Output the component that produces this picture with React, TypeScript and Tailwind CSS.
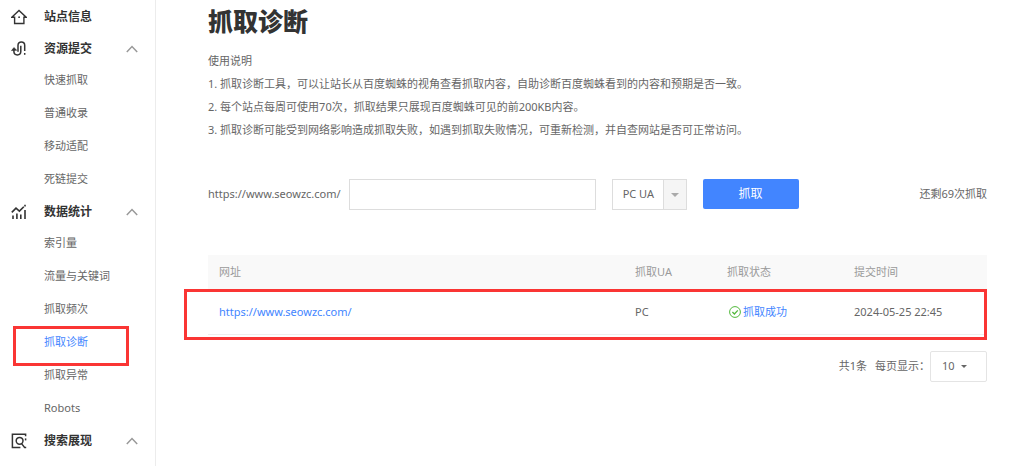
import type { ReactNode } from "react"

type Item = { label: string; active?: boolean }
type Section = { title: string; icon: ReactNode; items?: Item[]; collapsible?: boolean }

const HomeIcon = () => (
  <svg viewBox="0 0 16 16" className="w-4 h-4" fill="none" stroke="currentColor" strokeWidth="1.4">
    <path d="M0.8 8.3 8 1.4l7.2 6.9H12.9v6.2H3.6V8.3z" />
    <circle cx="8.1" cy="8.2" r="0.9" fill="currentColor" stroke="none" />
  </svg>
)

const LinkIcon = () => (
  <svg viewBox="0 0 16 16" className="w-4 h-4" fill="none" stroke="currentColor" strokeWidth="1.5">
    <path d="M2.9 8.2v2.4c0 2 1.4 3.3 3.4 3.3s3.5-1.3 3.5-3.3V4.8" />
    <path d="M7 10.8V4.2c0-2 1.4-3.3 3.3-3.3s3.4 1.3 3.4 3.3V10" />
    <path d="M0.5 9.6 2.9 6.6l2.8 2.6z" fill="currentColor" strokeWidth="0.6" />
    <path d="M13.7 12v1.8" />
  </svg>
)

const ChartIcon = () => (
  <svg viewBox="0 0 16 16" className="w-4 h-4" fill="none" stroke="currentColor" strokeWidth="1.6">
    <path d="M0.8 8.4 5 4.2l3.4 2.9 4.4-4.4" />
    <path d="M2 11.4V15M5.9 9.4V15M9.8 10.4V15M14 6v9M14 0.8v1.6" />
  </svg>
)

const SearchIcon = () => (
  <svg viewBox="0 0 16 16" className="w-4 h-4" fill="none" stroke="currentColor" strokeWidth="1.5">
    <path d="M14.6 3.2v-2H1.4v13.2h8" />
    <path d="M14.6 5.4v2" />
    <circle cx="8.6" cy="7.8" r="3.4" />
    <path d="M10.6 10.6l3 3.8h1.6" />
  </svg>
)

const sections: Section[] = [
  { title: "站点信息", icon: <HomeIcon /> },
  {
    title: "资源提交",
    icon: <LinkIcon />,
    collapsible: true,
    items: [{ label: "快速抓取" }, { label: "普通收录" }, { label: "移动适配" }, { label: "死链提交" }],
  },
  {
    title: "数据统计",
    icon: <ChartIcon />,
    collapsible: true,
    items: [
      { label: "索引量" },
      { label: "流量与关键词" },
      { label: "抓取频次" },
      { label: "抓取诊断", active: true },
      { label: "抓取异常" },
      { label: "Robots" },
    ],
  },
  { title: "搜索展现", icon: <SearchIcon />, collapsible: true },
]

const notes = [
  "1. 抓取诊断工具，可以让站长从百度蜘蛛的视角查看抓取内容，自助诊断百度蜘蛛看到的内容和预期是否一致。",
  "2. 每个站点每周可使用70次，抓取结果只展现百度蜘蛛可见的前200KB内容。",
  "3. 抓取诊断可能受到网络影响造成抓取失败，如遇到抓取失败情况，可重新检测，并自查网站是否可正常访问。",
]

function Sidebar() {
  return (
    <nav className="w-[156px] shrink-0 border-r border-[#ececec] pb-2">
      {sections.map((section) => (
        <div key={section.title}>
          <button
            type="button"
            className={`flex w-full items-center pl-[11px] pr-[17px] text-xs text-[#333] ${section.collapsible ? "h-[31px]" : "h-[33px]"}`}
          >
            {section.icon}
            <span className="ml-[17px] font-bold">{section.title}</span>
            {section.collapsible && (
              <svg viewBox="0 0 12 8" className="ml-auto w-3 h-2" fill="none" stroke="#999" strokeWidth="1.5">
                <path d="M0.8 7 6 1.6 11.2 7" />
              </svg>
            )}
          </button>
          {section.items && (
            <ul>
              {section.items.map((item) => (
                <li key={item.label} className="relative">
                  <a
                    href="#"
                    className={`flex h-[33px] items-center pl-11 ${item.active ? "text-[#4285ff]" : "text-[#666]"}`}
                  >
                    {item.label}
                  </a>
                  {item.active && (
                    <span className="pointer-events-none absolute left-[13px] top-0 h-10 w-[116px] border-3 border-[#fa3534]" />
                  )}
                </li>
              ))}
            </ul>
          )}
        </div>
      ))}
    </nav>
  )
}

export default function App() {
  return (
    <div className="flex min-h-screen bg-white text-[11px] text-[#666] font-['Noto_Sans','Noto_Sans_CJK_SC',sans-serif]">
      <Sidebar />
      <main className="min-w-0 flex-1 pl-13 pr-[37px]">
        <h1 className="pt-1 text-[25px] leading-[34px] font-black text-[#333]">抓取诊断</h1>

        <div className="mt-[11px] leading-[23px]">
          <p>使用说明</p>
          {notes.map((note) => (
            <p key={note}>{note}</p>
          ))}
        </div>

        <form className="mt-[38px] flex items-center" onSubmit={(e) => e.preventDefault()}>
          <label htmlFor="path">https://www.seowzc.com/</label>
          <input id="path" type="text" className="ml-2 h-[31px] w-[247px] border border-[#ddd] px-2 outline-none" />
          <div className="relative ml-4">
            <select
              aria-label="UA"
              className="block h-[31px] w-[75px] appearance-none border border-[#ddd] bg-white pl-[10px] outline-none"
            >
              <option>PC UA</option>
              <option>移动 UA</option>
            </select>
            <span className="pointer-events-none absolute inset-y-0 right-0 flex w-6 items-center justify-center border border-[#ddd] bg-[#f5f5f5]">
              <svg viewBox="0 0 8 4" className="w-2 h-1" fill="#aaa">
                <path d="M0 0h8L4 4z" />
              </svg>
            </span>
          </div>
          <button type="submit" className="ml-4 h-[30px] w-24 self-start rounded-xs bg-[#4285ff] text-xs text-white">
            抓取
          </button>
          <span className="ml-auto">还剩69次抓取</span>
        </form>

        <div className="relative mt-[45px]">
          <table className="w-full table-fixed text-left">
            <thead>
              <tr className="h-[35px] bg-[#f9f9f9] text-[#999]">
                <th className="pl-[11px] font-normal">网址</th>
                <th className="w-[92px] pl-[11px] font-normal">抓取UA</th>
                <th className="w-[127px] pl-[11px] font-normal">抓取状态</th>
                <th className="w-[144px] pl-[11px] font-normal">提交时间</th>
              </tr>
            </thead>
            <tbody>
              <tr className="h-11 border-b border-[#eee]">
                <td className="pl-[11px]">
                  <a href="#" className="text-[#4285ff]">
                    https://www.seowzc.com/
                  </a>
                </td>
                <td className="pl-[11px]">PC</td>
                <td className="pl-[13px]">
                  <a href="#" className="flex items-center gap-[2px] text-[#4285ff]">
                    <svg viewBox="0 0 12 12" className="w-3 h-3" fill="none" stroke="#52b83c" strokeWidth="1">
                      <circle cx="6" cy="6" r="5.4" />
                      <path d="M3.4 6l2 2 3.4-3.6" strokeWidth="1.3" />
                    </svg>
                    抓取成功
                  </a>
                </td>
                <td className="pl-[11px]">2024-05-25 22:45</td>
              </tr>
            </tbody>
          </table>
          <span className="pointer-events-none absolute -left-6 right-0 top-[34px] h-[51px] border-3 border-[#fa3534]" />
        </div>

        <div className="mt-4 flex items-center justify-end">
          <span>共1条</span>
          <label htmlFor="size" className="ml-2">
            每页显示：
          </label>
          <div className="relative">
            <select
              id="size"
              className="block h-[31px] w-[57px] appearance-none rounded-xs border border-[#e4e4e4] bg-white pl-[11px] outline-none"
            >
              <option>10</option>
              <option>20</option>
              <option>50</option>
            </select>
            <svg
              viewBox="0 0 6 3"
              className="pointer-events-none absolute right-5 top-[14px] h-[3px] w-[6px]"
              fill="#666"
            >
              <path d="M0 0h6L3 3z" />
            </svg>
          </div>
        </div>
      </main>
    </div>
  )
}
